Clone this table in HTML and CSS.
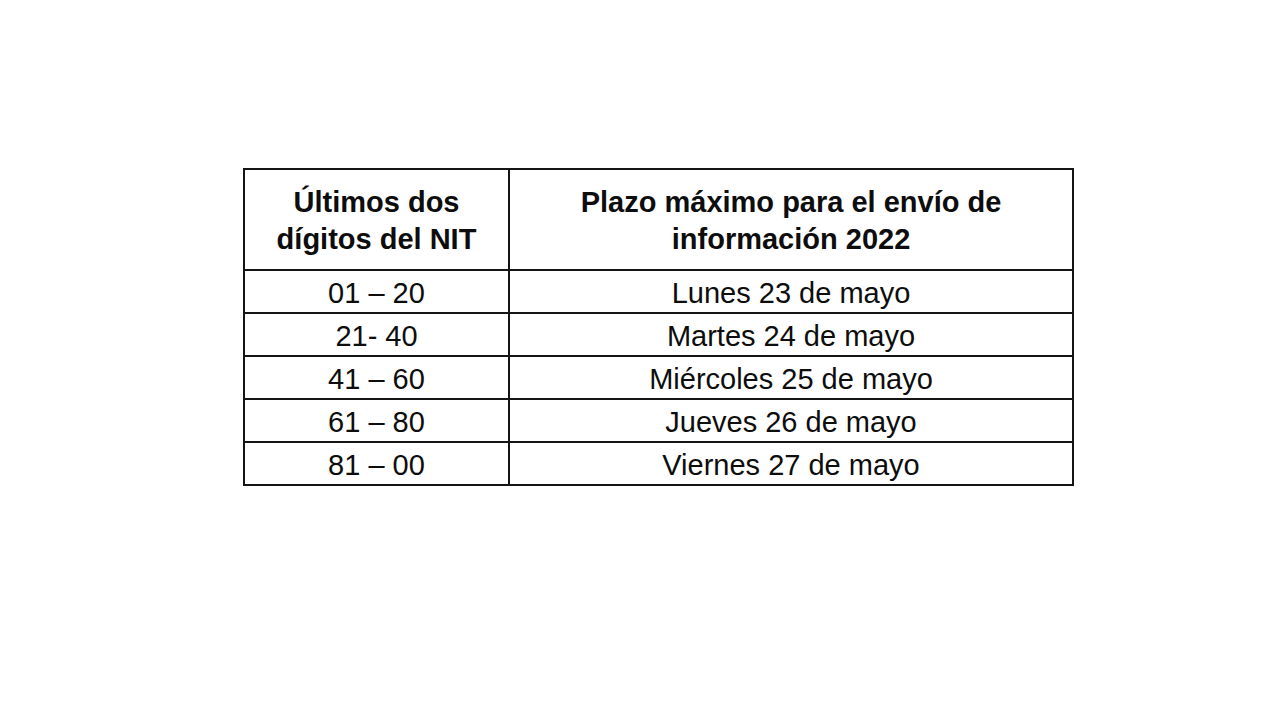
FILE: index.html
```html
<!DOCTYPE html>
<html lang="es">
<head>
<meta charset="utf-8">
<title>Plazos NIT</title>
<link rel="stylesheet" href="styles.css">
</head>
<body>
<main class="page">
  <table class="plazos">
    <thead>
      <tr>
        <th class="col-nit">Últimos dos<br>dígitos del NIT</th>
        <th class="col-fecha">Plazo máximo para el envío de<br>información 2022</th>
      </tr>
    </thead>
    <tbody>
      <tr><td>01 – 20</td><td>Lunes 23 de mayo</td></tr>
      <tr><td>21- 40</td><td>Martes 24 de mayo</td></tr>
      <tr><td>41 – 60</td><td>Miércoles 25 de mayo</td></tr>
      <tr><td>61 – 80</td><td>Jueves 26 de mayo</td></tr>
      <tr><td>81 – 00</td><td>Viernes 27 de mayo</td></tr>
    </tbody>
  </table>
</main>
</body>
</html>
```
FILE: styles.css
```css
html, body {
  margin: 0;
  padding: 0;
  background: #ffffff;
}
.page {
  width: 1280px;
  height: 720px;
  padding-top: 168px;
  padding-left: 243px;
  box-sizing: border-box;
}
.plazos {
  border-collapse: collapse;
  width: 831px;
  table-layout: fixed;
  font-family: "Liberation Sans", Arial, sans-serif;
  font-size: 29px;
  color: #0d0d0d;
}
.plazos th,
.plazos td {
  border: 2px solid #151515;
  text-align: center;
  padding: 0;
}
.plazos th {
  font-weight: bold;
  height: 96px;
  padding-top: 3px;
  line-height: 37px;
}
.plazos td {
  height: 38px;
  padding-top: 3px;
  line-height: 38px;
}
.col-nit {
  width: 263px;
}
```
